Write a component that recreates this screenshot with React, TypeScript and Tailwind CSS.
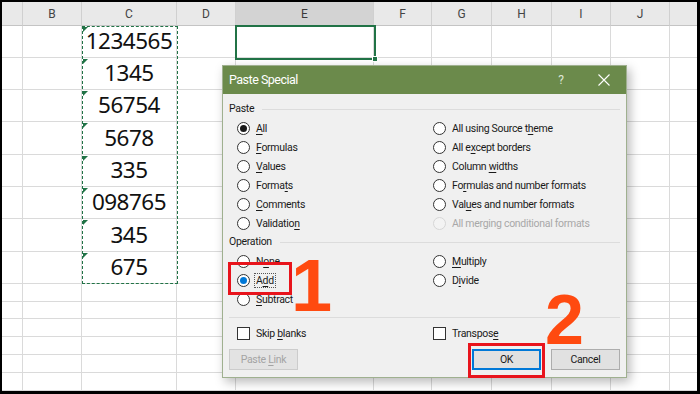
import React from 'react';

const COLS = [21, 59, 95, 59, 138, 58, 60, 60, 59, 59, 59];
const ROWS = [24, 32, 32, 32, 33, 32, 32, 33, 32, 18, 17, 18, 18, 18, 18];
const LETTERS = ['', 'B', 'C', 'D', 'E', 'F', 'G', 'H', 'I', 'J', ''];
const DATA = ['1234565', '1345', '56754', '5678', '335', '098765', '345', '675'];

function U({ children }: { children: React.ReactNode }) {
  return <span className="underline underline-offset-[1.5px] decoration-[0.8px]">{children}</span>;
}

function Radio({ checked, blue, disabled }: { checked?: boolean; blue?: boolean; disabled?: boolean }) {
  return (
    <span
      className={
        'flex w-[13px] h-[13px] shrink-0 items-center justify-center rounded-full border ' +
        (disabled ? 'border-[#d6d6d6] bg-[#f3f3f3]' : 'border-[#333333] bg-white')
      }
    >
      {checked && <span className={'w-[7px] h-[7px] rounded-full ' + (blue ? 'bg-[#0078d7]' : 'bg-[#1a1a1a]')} />}
    </span>
  );
}

function Check() {
  return <span className="w-[13px] h-[13px] shrink-0 border border-[#333333] bg-white" />;
}

type Item = { label: React.ReactNode; checked?: boolean; blue?: boolean; disabled?: boolean; focus?: boolean } | null;

function RadioItem({ item }: { item: Item }) {
  if (!item) return <div />;
  return (
    <div className="flex items-center gap-[6px] h-[19px]">
      <Radio checked={item.checked} blue={item.blue} disabled={item.disabled} />
      <span
        className={
          (item.disabled ? 'text-[#a8a8a8] ' : 'text-[#1a1a1a] ') +
          (item.focus ? 'border border-dotted border-[#555555] px-[1px] -ml-[2px] leading-[13px]' : '')
        }
      >
        {item.label}
      </span>
    </div>
  );
}

const PASTE_ROWS: [Item, Item][] = [
  [{ label: <><U>A</U>ll</>, checked: true }, { label: <>All using Source t<U>h</U>eme</> }],
  [{ label: <><U>F</U>ormulas</> }, { label: <>All e<U>x</U>cept borders</> }],
  [{ label: <><U>V</U>alues</> }, { label: <>Column <U>w</U>idths</> }],
  [{ label: <>Forma<U>t</U>s</> }, { label: <>Fo<U>r</U>mulas and number formats</> }],
  [{ label: <><U>C</U>omments</> }, { label: <>Val<U>u</U>es and number formats</> }],
  [{ label: <>Validatio<U>n</U></> }, { label: <>All merging conditional formats</>, disabled: true }],
];

const OP_ROWS: [Item, Item][] = [
  [{ label: <>N<U>o</U>ne</> }, { label: <><U>M</U>ultiply</> }],
  [{ label: <>A<U>d</U>d</>, checked: true, blue: true, focus: true }, { label: <>D<U>i</U>vide</> }],
  [{ label: <><U>S</U>ubtract</> }, null],
];

function Dialog() {
  return (
    <div className="absolute left-[222px] top-[65px] w-[405px] h-[313px] flex flex-col border border-[#9fb08f] bg-[#f0f0f0] shadow-[3px_4px_10px_rgba(0,0,0,0.28)] font-['Roboto',sans-serif]">
      <div className="h-[28px] shrink-0 flex items-center justify-between bg-[#6b8a4b] pl-[6px] pr-[7px]">
        <span className="text-white text-[12.5px] tracking-[-0.5px]">Paste Special</span>
        <div className="flex items-center gap-[13px]">
          <span className="w-[30px] text-center text-[#dfe7d6] text-[12px]">?</span>
          <span className="w-[30px] flex items-center justify-center">
            <svg width="12" height="12" viewBox="0 0 12 12">
              <path d="M0.5 0.5 L11.5 11.5 M11.5 0.5 L0.5 11.5" stroke="#ffffff" strokeWidth="1.1" />
            </svg>
          </span>
        </div>
      </div>
      <div className="flex-1 flex flex-col px-[6px] text-[10.5px] tracking-[-0.3px] text-[#1a1a1a]">
        <div className="mt-[7px] h-[16px] flex items-center">
          <span>Paste</span>
          <span className="ml-[8px] flex-1 h-px bg-[#dcdcdc]" />
        </div>
        <div className="mt-[2px] pl-[8px] grid grid-cols-[196px_1fr]">
          {PASTE_ROWS.map((row, i) => (
            <React.Fragment key={i}>
              <RadioItem item={row[0]} />
              <RadioItem item={row[1]} />
            </React.Fragment>
          ))}
        </div>
        <div className="mt-[1px] h-[16px] flex items-center">
          <span>Operation</span>
          <span className="ml-[8px] flex-1 h-px bg-[#dcdcdc]" />
        </div>
        <div className="mt-[2px] pl-[8px] grid grid-cols-[196px_1fr]">
          {OP_ROWS.map((row, i) => (
            <React.Fragment key={i}>
              <RadioItem item={row[0]} />
              <RadioItem item={row[1]} />
            </React.Fragment>
          ))}
        </div>
        <div className="mt-[8px] h-px bg-[#dcdcdc]" />
        <div className="mt-[6px] pl-[8px] grid grid-cols-[196px_1fr]">
          <div className="flex items-center gap-[6px] h-[19px]">
            <Check />
            <span>Skip <U>b</U>lanks</span>
          </div>
          <div className="flex items-center gap-[6px] h-[19px]">
            <Check />
            <span>Transpos<U>e</U></span>
          </div>
        </div>
        <div className="mt-[6px] flex items-center justify-between">
          <div className="w-[69px] h-[21px] flex items-center justify-center border border-[#cccccc] bg-[#e3e3e3] text-[#a3a3a3]">
            <span>Paste <U>L</U>ink</span>
          </div>
          <div className="flex items-center gap-[10px]">
            <div className="w-[69px] h-[21px] flex items-center justify-center border-2 border-[#0078d7] bg-[#e1e1e1]">OK</div>
            <div className="w-[69px] h-[21px] flex items-center justify-center border border-[#adadad] bg-[#e1e1e1]">Cancel</div>
          </div>
        </div>
      </div>
    </div>
  );
}

export default function App() {
  const cells: React.ReactNode[] = [];
  ROWS.forEach((_, r) => {
    COLS.forEach((__, c) => {
      const key = r + '-' + c;
      if (r === 0) {
        cells.push(
          <div
            key={key}
            className={
              'flex items-center justify-center border-r border-b border-r-[#d0d0d0] text-[12px] ' +
              (c === 4 ? 'bg-[#d3d3d3] border-b-[#b9b9b9] text-[#3a3a3a]' : 'bg-[#e9e9e9] border-b-[#c4c4c4] text-[#444444]')
            }
          >
            {LETTERS[c]}
          </div>
        );
      } else if (c === 2 && r >= 1 && r <= 8) {
        cells.push(
          <div
            key={key}
            className="relative flex items-center justify-center border-r border-b border-[#dadada] text-[22.5px] tracking-[-0.5px] text-[#111111] font-['Noto_Sans',sans-serif] leading-none"
          >
            <span className="absolute left-[1px] top-[1px] w-0 h-0 border-t-[5px] border-r-[5px] border-t-[#217346] border-r-transparent" />
            {DATA[r - 1]}
          </div>
        );
      } else {
        cells.push(<div key={key} className="border-r border-b border-[#dadada]" />);
      }
    });
  });

  return (
    <div className="relative w-[700px] h-[394px] bg-black pl-[2px] pt-[2px] overflow-hidden font-['Roboto',sans-serif]">
      <div className="w-[695px] h-[389px] bg-white overflow-hidden">
        <div className="grid w-[727px] grid-cols-[21px_59px_95px_59px_138px_58px_60px_60px_59px_59px_59px] grid-rows-[24px_32px_32px_32px_33px_32px_32px_33px_32px_18px_17px_18px_18px_18px_18px]">
          {cells}
        </div>
      </div>

      {/* copy marquee around C2:C9 */}
      <div className="absolute left-[82px] top-[26px] w-[96px] h-[258px] border border-dashed border-[#217346]" />

      {/* selected cell E2 */}
      <div className="absolute left-[235px] top-[25px] w-[141px] h-[35px] border-2 border-[#217346]" />
      <div className="absolute left-[372px] top-[56px] w-[6px] h-[6px] bg-[#217346] border border-white" />

      <Dialog />

      {/* annotations */}
      <div className="absolute left-[228px] top-[262px] w-[64px] h-[33px] border-[3px] border-[#e8141c]" />
      <div className="absolute left-[291px] top-[260px] text-[74px] leading-[0.7] font-bold text-[#ff4a10] font-['Liberation_Sans',sans-serif]">1</div>
      <div className="absolute left-[545px] top-[296px] text-[70px] leading-[0.7] font-bold text-[#ff4a10] font-['Liberation_Sans',sans-serif]">2</div>
      <div className="absolute left-[468px] top-[343px] w-[77px] h-[35px] border-[3px] border-[#e8141c]" />
    </div>
  );
}
